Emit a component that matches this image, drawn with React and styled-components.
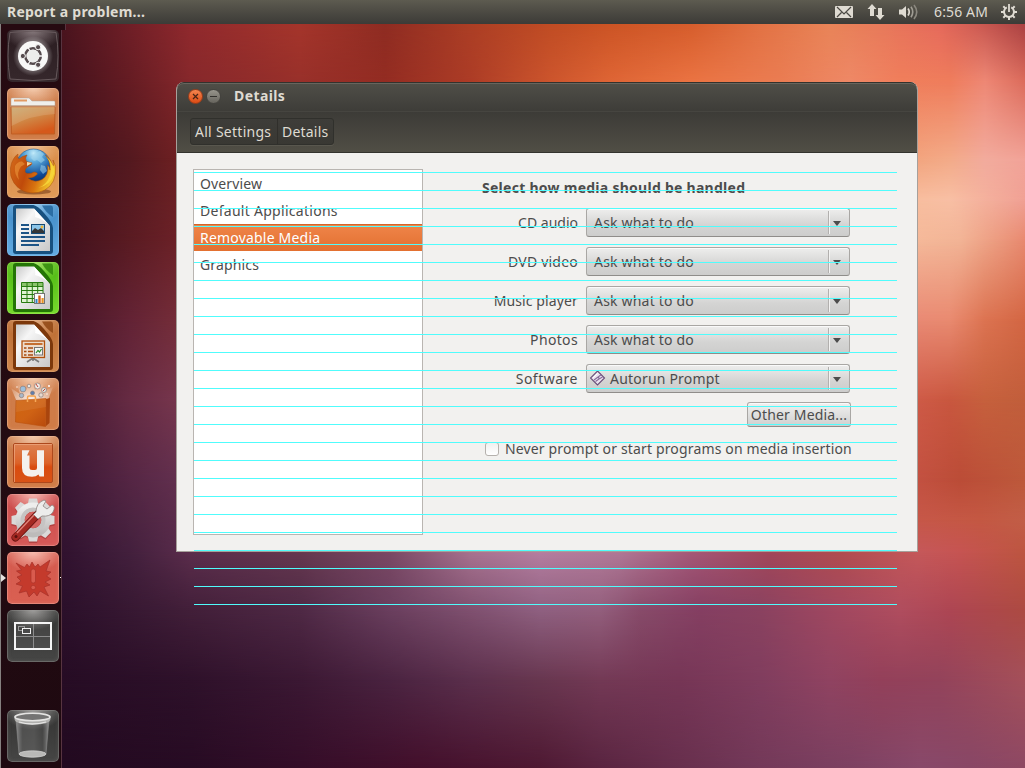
import React from 'react';
import styled, { createGlobalStyle, css } from 'styled-components';

const Global = createGlobalStyle`
  *, *::before, *::after { box-sizing: border-box; }
  html, body { margin: 0; padding: 0; overflow: hidden; }
  body { font-family: "Noto Sans", "Open Sans", sans-serif; font-size: 14px; color: #4c4c4c; }
`;

const Desktop = styled.div`
  position: relative;
  display: flex;
  flex-direction: column;
  width: 1025px;
  height: 768px;
  overflow: hidden;
  background: #2c1029;
`;

const Text = styled.span`
  white-space: pre;
  line-height: 20px;
  letter-spacing: ${(p) => p.$track || 0}px;
  font-weight: ${(p) => (p.$bold ? 700 : 400)};
`;

/* ---------- wallpaper ---------- */

const mesh = [
  { y: 24, c: [[62, '#4a141e'], [130, '#701f27'], [190, '#90292d'], [300, '#a5352b'], [385, '#8f2c22'], [470, '#ac3e25'], [550, '#c04c24'], [610, '#cc5425'], [690, '#d65d2c'], [760, '#e27244'], [830, '#e98458'], [880, '#e87a5b'], [940, '#e66a5c'], [980, '#cc5a52'], [1025, '#aa4142']] },
  { y: 82, c: [[62, '#43121c'], [130, '#651c23'], [190, '#86282b'], [300, '#98302a'], [385, '#932c22'], [470, '#ac3c26'], [550, '#cc552d'], [610, '#de6535'], [690, '#ea7342'], [780, '#ea7c52'], [850, '#ee8866'], [900, '#f07e5b'], [950, '#ef7d5c'], [985, '#ee8875'], [1025, '#dc6c5c']] },
  { y: 160, c: [[62, '#3f111c'], [130, '#54191f'], [190, '#742223'], [900, '#f2a27a'], [950, '#f3ab89'], [985, '#f2ab9d'], [1025, '#f2a398']] },
  { y: 200, c: [[62, '#40121d'], [130, '#571a21'], [190, '#712326'], [900, '#f8bd9c'], [950, '#f8bfa4'], [1025, '#f0a094']] },
  { y: 240, c: [[62, '#40121d'], [130, '#5a1b22'], [190, '#702329'], [900, '#f6bb9b'], [960, '#f2b496'], [1025, '#e8896f']] },
  { y: 320, c: [[62, '#441526'], [130, '#632335'], [190, '#79303a'], [900, '#e98976'], [950, '#e98a70'], [985, '#dc7351'], [1025, '#d36643']] },
  { y: 400, c: [[62, '#431830'], [130, '#662b43'], [190, '#7b3950'], [900, '#d15c4b'], [950, '#c9573f'], [985, '#c6603d'], [1025, '#c15e3b']] },
  { y: 480, c: [[62, '#3b1733'], [130, '#552644'], [190, '#653251'], [900, '#c65345'], [960, '#bb4c37'], [1025, '#bd593b']] },
  { y: 520, c: [[62, '#351531'], [130, '#4b2340'], [190, '#5f2f4e'], [900, '#c7574a'], [980, '#c45843'], [1025, '#c25e47']] },
  { y: 552, c: [[62, '#31122f'], [130, '#43203d'], [190, '#5b2d4c'], [300, '#65384f'], [390, '#7a4864'], [470, '#a7728f'], [540, '#b57ea0'], [620, '#b07896'], [690, '#a55878'], [770, '#a24659'], [840, '#b04c50'], [917, '#c5585a'], [960, '#c65452'], [1025, '#bd5540']] },
  { y: 610, c: [[62, '#2b102a'], [130, '#371832'], [190, '#421f39'], [300, '#4f2945'], [390, '#6a3f5e'], [470, '#7f506f'], [540, '#8f6080'], [600, '#935f7d'], [640, '#884b6a'], [700, '#853f62'], [760, '#8a4260'], [840, '#a24860'], [900, '#b04d5e'], [950, '#ad4653'], [1025, '#ad4a42']] },
  { y: 680, c: [[62, '#260c24'], [190, '#2e112a'], [300, '#3b1833'], [390, '#4a2340'], [470, '#5b2f4c'], [540, '#67364f'], [600, '#733955'], [680, '#763656'], [760, '#803d5e'], [830, '#904361'], [880, '#93405a'], [940, '#93435b'], [1025, '#a4505a']] },
  { y: 768, c: [[62, '#220a20'], [190, '#270b23'], [300, '#340d28'], [420, '#430f2b'], [540, '#4e1832'], [600, '#592440'], [680, '#672f4d'], [760, '#733959'], [850, '#7c4162'], [920, '#88496a'], [970, '#884766'], [1025, '#8e4863']] },
];
const ramp = (row) => `linear-gradient(to right, ${row.c.map(([x, c]) => `${c} ${x}px`).join(', ')})`;

const Wallpaper = styled.div`
  position: absolute;
  inset: 24px 0 0 0;
  display: flex;
  flex-direction: column;
`;
const Band = styled.div`
  display: flex;
  flex: none;
  height: ${(p) => p.$h}px;
  background: ${(p) => p.$from};
  &::after {
    content: '';
    flex: 1;
    background: ${(p) => p.$to};
    mask-image: linear-gradient(to bottom, transparent, #000);
  }
`;

/* ---------- top panel ---------- */

const Panel = styled.header`
  position: relative;
  display: flex;
  align-items: center;
  flex: none;
  height: 24px;
  padding: 0 8px 0 7px;
  color: #dfdbd2;
  background: linear-gradient(#5d5b50, #4c4a43 50%, #3c3b37);
`;
const Indicators = styled.div`
  display: flex;
  align-items: center;
  margin-left: auto;
  svg { display: block; }
`;
const Slot = styled.div`
  display: flex;
  margin-right: ${(p) => p.$gap || 0}px;
`;

/* ---------- launcher ---------- */

const Launcher = styled.nav`
  position: relative;
  display: flex;
  flex-direction: column;
  gap: 6px;
  width: 62px;
  height: 744px;
  padding: 6px 0 6px 6px;
  background: linear-gradient(#260a11, #230b12 60%, #1e0910);
  border-left: 1px solid #85807f;
  border-right: 1px solid #573440;
  &::before {
    content: '';
    position: absolute;
    left: 60px;
    top: 0;
    width: 5px;
    height: 6px;
    background: #260a11;
    border-right: 1px solid #573440;
  }
`;
const tones = {
  dash: ['#8a7d80', '#2a1c20', '#36282c'],
  orange: ['#f5cdb0', '#cd7d4c', '#d07b46'],
  amber: ['#efc093', '#d98b45', '#e09a58'],
  blue: ['#9bcdf0', '#3f88c4', '#62abe2'],
  green: ['#b0ea70', '#4cb412', '#76dc2c'],
  brown: ['#e2b088', '#b96a30', '#cf864c'],
  red: ['#f6b8b0', '#c94848', '#d65a58'],
  coral: ['#f8bdb0', '#d35a4e', '#da6052'],
  gray: ['#a09f9d', '#333332', '#464645'],
};
const Tile = styled.div`
  position: relative;
  display: flex;
  flex: none;
  width: 52px;
  height: 52px;
  border-radius: 5px;
  margin-top: ${(p) => (p.$last ? 'auto' : 0)};
  ${(p) => {
    const [hi, mid, lo] = tones[p.$tone];
    return css`
      background: radial-gradient(ellipse 30px 20px at 50% 0, ${hi}, transparent), linear-gradient(${mid}, ${lo});
      box-shadow: ${p.$tone === 'dash' ? 'none' : `inset 0 0 0 1px ${hi}55, inset 0 0 4px ${hi}44`};
    `;
  }}
  svg { display: block; }
`;
const RunMark = styled.i`
  position: absolute;
  left: -6px;
  top: 22px;
  border: 4px solid transparent;
  border-left: 5px solid #e6e2e0;
  border-right: 0;
`;
const FocusMark = styled.i`
  position: absolute;
  right: -2px;
  top: 25px;
  width: 1px;
  height: 1px;
  background: #fff;
`;

const Art = ({ children }) => <svg width="52" height="52" viewBox="0 0 52 52">{children}</svg>;

const DashArt = () => (
  <Art>
    <defs><radialGradient id="halo"><stop offset=".6" stopColor="#fff" stopOpacity=".4" /><stop offset="1" stopColor="#fff" stopOpacity="0" /></radialGradient></defs>
    <path d="M3 2.5Q26-.5 49 2.5Q53 26 49 49Q26 52 3 49Q-1 26 3 2.5Z" fill="none" stroke="#67595c" strokeWidth="1" />
    <circle cx="26" cy="26" r="20" fill="url(#halo)" />
    <circle cx="26" cy="26" r="15" fill="#f8f8f7" />
    <circle cx="26" cy="26" r="7.8" fill="none" stroke="#554a4d" strokeWidth="2.6" />
    <g stroke="#f8f8f7" strokeWidth="1.3"><path d="M26 26L37 26M26 26L20.5 16.5M26 26L20.5 35.5" /></g>
    <circle cx="26" cy="26" r="6.3" fill="#ededec" />
    <g fill="#554a4d" stroke="#f8f8f7" strokeWidth="1"><circle cx="15.8" cy="26" r="2.6" /><circle cx="31.1" cy="17.2" r="2.6" /><circle cx="31.1" cy="34.8" r="2.6" /></g>
  </Art>
);
const FilesArt = () => (
  <Art>
    <defs><linearGradient id="fold" x1="0" y1="0" x2=".5" y2="1"><stop stopColor="#c8a66c" /><stop offset=".45" stopColor="#cf8d4b" /><stop offset="1" stopColor="#d5591b" /></linearGradient></defs>
    <path d="M4 20V11Q4 10 5 10H22L25 13H47Q48 13 48 14V20Z" fill="#efefec" stroke="#b5a79b" strokeWidth=".5" />
    <path d="M7 11.5H20V13.5H7Z" fill="#e19a64" />
    <path d="M4 18H48" stroke="#a37552" />
    <path d="M4 19H48L47.5 46H4.5Z" fill="url(#fold)" stroke="#bf5e23" strokeWidth="1" />
    <path d="M4.5 38Q24 27 48 26V19.5H4.5Z" fill="#fff" opacity=".13" />
    <path d="M4.5 19.7H47.5" stroke="#e1b077" strokeWidth=".7" />
  </Art>
);
const FirefoxArt = () => (
  <Art>
    <defs>
      <radialGradient id="globe" cx=".5" cy=".12" r=".85"><stop stopColor="#c4ecfa" /><stop offset=".3" stopColor="#5aa8da" /><stop offset=".75" stopColor="#0f4b98" /><stop offset="1" stopColor="#07306f" /></radialGradient>
      <linearGradient id="fur" x1="0" y1="0" x2="1" y2=".3"><stop stopColor="#d56c1c" /><stop offset=".45" stopColor="#bf4a0a" /><stop offset=".72" stopColor="#d87410" /><stop offset="1" stopColor="#f0c02a" /></linearGradient>
    </defs>
    <ellipse cx="27" cy="45.5" rx="17" ry="3" fill="#6d3513" opacity=".55" />
    <circle cx="26.5" cy="20.5" r="17.5" fill="url(#globe)" stroke="#27588f" strokeWidth=".6" />
    <path d="M27 8L33 5L37 8L35 11L38 14L34 17L30 14L27 15L24 12ZM34 19L38 20L40 25L36 28L33 24Z" fill="#a9dbef" opacity=".5" />
    <path d="M3.5 22Q4 17 6.500 13Q8 10 11 8Q10 12 12 13Q15 10 20 9Q17.500 12 19.500 15.500L25 17Q25 19 21 20.500L18.500 23Q17 26 20 27.500Q24 28 27 26Q30 26 30.500 28Q27 32 21 32Q27 37.500 35 33.500Q42 29 40.500 19Q43 21 43 24Q44 16 38.500 9Q44 13 46 20Q47.500 18 46 14Q50 20 48.500 28Q46 43 31 46.500Q15 49 7 37Q2.500 30 3.500 22Z" fill="url(#fur)" stroke="#a84a0b" strokeWidth=".5" />
    <path d="M39 10Q46 19 43 29Q40 39 31 42Q44 39 47 28Q49 20 39 10Z" fill="#f7d83a" opacity=".85" />
    <path d="M8 20Q11 15 15 15.500L18 18L14 20.500Q9.500 26 12 34Q7 28 8 20Z" fill="#ef9a3e" opacity=".55" />
    <path d="M20 20L25 17L20 16Z" fill="#f4d7a5" />
  </Art>
);
const Sheet = ({ id, dark, mid, children }) => (
  <Art>
    <defs><linearGradient id={id} x1="0" y1="0" x2="1" y2="1"><stop stopColor="#c9c9c9" /><stop offset=".3" stopColor="#f6f6f6" /><stop offset="1" stopColor="#c8c8c8" /></linearGradient></defs>
    <path d="M9 1H26.5Q31 2 37 9Q46 19 46 24V47Q46 50 43 50H9Q6 50 6 47V4Q6 1 9 1Z" fill={dark} />
    <path d="M35 1.5H44Q46 1.500 46 4V13Q39 9 35 1.500Z" fill={mid} opacity=".85" />
    <path d="M9 4.5H27L43 22V47H9Z" fill={`url(#${id})`} />
    <path d="M27 4.5Q29 12 28 13Q36 15 43 22Q34 12 27 4.5Z" fill="#fff" />
    {children}
  </Art>
);
const WriterArt = () => (
  <Sheet id="shW" dark="#17507f" mid="#23659c">
    <path d="M14 21H22M14 25H22M14 29H22M14 33H38M14 37H38M14 41H32" stroke="#1d5486" strokeWidth="2" />
    <rect x="24.5" y="20.5" width="13" height="9" fill="#8cc6ea" stroke="#164b76" />
    <path d="M25 29V27L28 24L31 26L34 24L37 27V29Z" fill="#363636" /><circle cx="35" cy="23" r="1.4" fill="#f0b536" />
  </Sheet>
);
const CalcArt = () => (
  <Sheet id="shC" dark="#247506" mid="#328a0c">
    <path d="M14.5 20.5H36V40.5H14.5Z" fill="#dff3d2" /><path d="M14.5 20.5H36V24H14.5Z" fill="#5fab37" opacity=".65" />
    <path d="M14.5 20.5H36V40.5H14.5ZM14.5 24.5H36M14.5 28.5H36M14.5 32.5H36M14.5 36.5H36M20 20.5V40.5M25.3 20.5V40.5M30.7 20.5V40.5" fill="none" stroke="#277b10" />
    <rect x="27.5" y="31.5" width="10" height="10" fill="#fff" stroke="#747474" />
    <path d="M31.3 33.5H33.7V41H31.3Z" fill="#d2621a" /><path d="M34.5 36H36.7V41H34.5Z" fill="#e69424" /><path d="M28.5 37H30.5V41H28.5Z" fill="#3182c1" />
  </Sheet>
);
const ImpressArt = () => (
  <Sheet id="shI" dark="#7c380b" mid="#8f4614">
    <path d="M20 42L26 38L32 42M26 37V41" stroke="#7a7a7a" strokeWidth="1.6" fill="none" />
    <rect x="15" y="21" width="22.5" height="16.5" fill="#eddccc" stroke="#b1500d" strokeWidth="1.3" />
    <path d="M17.5 24H35.5" stroke="#bd5c16" strokeWidth="1.7" />
    <path d="M17 28H19.5M17 31.5H19.5M17 35H19.5M21 28H26M21 31.5H26M21 35H26" stroke="#a74a10" strokeWidth="1.7" />
    <rect x="27.5" y="27.5" width="8" height="7.5" fill="#f5f5f5" stroke="#777" /><path d="M29 33L31 30.5L32.5 32L34.5 29" stroke="#2b8d27" strokeWidth="1.2" fill="none" />
  </Sheet>
);
const SoftwareArt = () => (
  <Art>
    <defs>
      <linearGradient id="bag" x1="0" y1="0" x2="1" y2="1"><stop stopColor="#d0660f" /><stop offset=".5" stopColor="#cf6214" /><stop offset="1" stopColor="#b84a0d" /></linearGradient>
      <radialGradient id="burst" cx=".5" cy=".9" r=".8"><stop stopColor="#fff" stopOpacity=".95" /><stop offset="1" stopColor="#fff" stopOpacity="0" /></radialGradient>
    </defs>
    <path d="M10 24L4 10L13 16L10 5L19 12L24 2L28 12L37 4L35 14L46 9L41 22Z" fill="url(#burst)" />
    <g stroke="#8e7d78" strokeWidth=".7"><circle cx="16" cy="11" r="2.9" fill="#9cc0dc" /><circle cx="22" cy="8" r="1.8" fill="#e8e8e5" /><circle cx="30.5" cy="8" r="3" fill="#f1eae3" /><circle cx="37" cy="12" r="2.5" fill="#dfe2df" /><circle cx="25.5" cy="15" r="2" fill="#5f7eae" /><circle cx="14.5" cy="17.5" r="2.2" fill="#a8b8c9" /><circle cx="34" cy="17" r="2.2" fill="#e7d9cf" /></g>
    <path d="M29 6L31 9M36 13L38 11" stroke="#c14536" /><g fill="#fff"><circle cx="10" cy="9" r=".7" /><circle cx="42" cy="8" r="1" /><circle cx="40" cy="16" r=".7" /></g>
    <path d="M39 21L43 20L42.5 45L38.5 48.5Z" fill="#a9450e" />
    <path d="M9 22.5L39 20.5L38.5 48.5L8.5 44Z" fill="url(#bag)" stroke="#bb500e" strokeWidth=".6" />
    <path d="M20.5 24V19.5Q20.5 18 22 18H27Q28.5 18 28.5 19.5V24" fill="none" stroke="#f6a24c" strokeWidth="1.5" />
    <path d="M9 34L39 29V20.5L9 22.5Z" fill="#fff" opacity=".07" />
  </Art>
);
const OneArt = () => (
  <Art>
    <defs><linearGradient id="one" x1="0" y1="0" x2="0" y2="1"><stop stopColor="#dc8152" /><stop offset=".5" stopColor="#dc6329" /><stop offset=".6" stopColor="#d94c10" /><stop offset="1" stopColor="#d85316" /></linearGradient></defs>
    <rect x="6.5" y="7.5" width="39" height="39" rx="1.5" fill="url(#one)" stroke="#ad481c" />
    <path d="M7.5 46V8.5H45" fill="none" stroke="#efaa84" strokeWidth=".7" />
    <path d="M15 14.3H22.5L20 19.500H22.5V32Q22.5 34 25 34H28Q30 34 30 32V14.3H37V40.5H32.500L31.5 38.5Q29 40.7 25 40.7Q15 40.7 15 32Z" fill="#f4f1ed" />
  </Art>
);
const SettingsArt = () => {
  const teeth = Array.from({ length: 8 }, (_, i) => <path key={i} d="M22 4.5H30L31.5 11H20.5Z" transform={`rotate(${i * 45} 26 26)`} />);
  return (
    <Art>
      <defs><linearGradient id="gear" x1="0" y1="0" x2="0" y2="1"><stop stopColor="#eeeeed" /><stop offset="1" stopColor="#bdbbba" /></linearGradient></defs>
      <g fill="#7f2929" opacity=".4" transform="translate(0 1.5)">{teeth}<circle cx="26" cy="26" r="17" /></g>
      <g fill="#dad9d8">{teeth}</g>
      <circle cx="26" cy="26" r="13" fill="none" stroke="url(#gear)" strokeWidth="9" />
      <circle cx="26" cy="26" r="10.5" fill="none" stroke="#c6c4c3" strokeWidth="4" /><circle cx="26" cy="26" r="8.3" fill="#d4625e" />
      <path d="M8.5 43.5L31 20" stroke="#6d1512" strokeWidth="8" strokeLinecap="round" />
      <path d="M8.5 43.3L31 19.8" stroke="#a42922" strokeWidth="6.4" strokeLinecap="round" />
      <path d="M10 39L29 19" stroke="#e08279" strokeWidth="1.3" />
      <circle cx="9" cy="42.5" r="1.5" fill="#59100d" />
      <path d="M29 18Q29 9 37 6L39 7L36 12L40 15L45 11Q49 12 46 18Q43 23 35 22L31 25L26.5 20.5Z" fill="#ededec" stroke="#8d8380" strokeWidth=".8" />
    </Art>
  );
};
const CrashArt = () => (
  <Art>
    <path d="M9 11L17.500 15.500L20 12L22.500 15L25 10L28 15L31 12L33 15L43 8L39 19L44 20L39.500 24L44 27L38 30L43 33L37 35L41.500 44L33 39L30 44L27 40L22 45L19.500 39L12 41L15.500 34L9 32L14 29L10 25L15 23L9.500 19L14.500 18Z" fill="#c43a2c" stroke="#a6312a" strokeWidth=".7" />
    <rect x="24" y="17" width="4.500" height="14" rx="2" fill="#d95b4e" stroke="#ac332a" strokeWidth=".7" /><rect x="24" y="33.500" width="4.500" height="4" rx="1.800" fill="#d95b4e" stroke="#ac332a" strokeWidth=".7" />
  </Art>
);
const WorkspaceArt = () => (
  <Art>
    <path d="M8 13H44V39H8Z" fill="#fff" opacity=".06" />
    <path d="M26.5 14V38M9 26.5H43" stroke="#8c8c8c" />
    <rect x="8" y="13" width="36" height="26" fill="none" stroke="#f4f4f4" strokeWidth="2" />
    <rect x="11.5" y="16.5" width="6" height="4" fill="none" stroke="#999" /><rect x="15.5" y="18.5" width="8" height="5" fill="#4a4a4a" stroke="#f0f0f0" />
  </Art>
);
const TrashArt = () => (
  <Art>
    <defs><linearGradient id="bin" x1="0" x2="1" y1="0" y2="0"><stop stopColor="#a9aaaa" stopOpacity=".75" /><stop offset=".2" stopColor="#777" stopOpacity=".35" /><stop offset=".55" stopColor="#777" stopOpacity=".4" /><stop offset=".8" stopColor="#666" stopOpacity=".25" /><stop offset="1" stopColor="#bbb" stopOpacity=".7" /></linearGradient></defs>
    <path d="M9 10L12 44Q25 50 39 44L42 10Z" fill="url(#bin)" stroke="#8a8a8a" strokeWidth=".6" />
    <ellipse cx="25.5" cy="44" rx="13.5" ry="3.2" fill="#b9b9b7" stroke="#d6d6d4" strokeWidth=".7" />
    <path d="M7.5 6V9Q8 14.5 25.5 14.5Q43 14.5 43.5 9V6Z" fill="#b8b8b6" opacity=".9" />
    <ellipse cx="25.5" cy="7" rx="17.5" ry="3.7" fill="#747473" stroke="#e4e4e2" strokeWidth="1.6" />
    <path d="M12 12Q25 16 39 12" stroke="#e7e7e6" strokeWidth="1.3" fill="none" />
  </Art>
);

/* ---------- window ---------- */

const Window = styled.section`
  position: absolute;
  left: 176px;
  top: 82px;
  display: flex;
  flex-direction: column;
  width: 742px;
  height: 470px;
  border: 1px solid #a7a09b;
  border-top: 0;
  border-radius: 8px 8px 0 0;
  overflow: hidden;
  background: #f2f1ef;
`;
const TitleBar = styled.div`
  display: flex;
  align-items: center;
  flex: none;
  gap: 3px;
  height: 30px;
  margin: 0 -1px;
  padding: 0 12px 2px;
  border-radius: 8px 8px 0 0;
  color: #dfdbd2;
  background: linear-gradient(#504f48, #3d3c38);
  box-shadow: inset 0 1px #33322e, inset 0 2px #67655d, inset 0 -1px #464540;
  ${Text} { margin-left: 10px; }
`;
const WinButton = styled.span`
  display: flex;
  width: 15px;
  height: 15px;
  margin-top: 1px;
  border-radius: 50%;
  border: 1px solid ${(p) => (p.$close ? '#9d3e1b' : '#44433e')};
  background: ${(p) => (p.$close ? 'linear-gradient(#f4864f, #dc4b14)' : 'linear-gradient(#97958c, #66645d)')};
`;
const ToolBar = styled.div`
  display: flex;
  align-items: center;
  flex: none;
  height: 41px;
  margin: 0 -1px;
  padding: 0 14px 1px;
  background: linear-gradient(#3c3b37, #504e45);
  border-bottom: 1px solid #34332e;
`;
const Crumbs = styled.div`
  display: flex;
  height: 27px;
  border: 1px solid #30302c;
  border-radius: 3px;
  background: linear-gradient(#3e3d39, #393833);
  box-shadow: 0 1px #59574e;
`;
const Crumb = styled.span`
  display: flex;
  align-items: center;
  width: ${(p) => p.$w}px;
  padding-left: 4px;
  color: #dfdbd2;
  & + & { border-left: 1px solid #302f2b; }
`;
const Body = styled.div`
  display: flex;
  flex: 1;
  padding: 16px;
`;
const List = styled.div`
  width: 230px;
  height: 366px;
  border: 1px solid #b9b5b1;
  background: #fff;
`;
const ListRow = styled.div`
  display: flex;
  align-items: center;
  height: 27px;
  padding: 1px 0 0 6px;
  ${(p) => p.$on && css`
    color: #fff;
    background: linear-gradient(#ef854a, #e37030);
    box-shadow: inset 0 1px #d0652c;
  `}
`;
const Form = styled.div`
  display: flex;
  flex-direction: column;
  width: 428px;
  padding-top: 9px;
  padding-left: 59px;
`;
const FormRow = styled.div`
  display: grid;
  grid-template-columns: 96px 264px;
  column-gap: 8px;
  align-items: center;
  height: 29px;
  margin-bottom: 10px;
  ${Text}:first-child { justify-self: end; }
`;
const Heading = styled.h2`
  display: flex;
  margin: 0 0 10px;
  font-size: 14px;
`;
const Combo = styled.div`
  display: flex;
  align-items: center;
  height: 29px;
  padding-left: ${(p) => (p.$icon ? 3 : 7)}px;
  border: 1px solid #a9a7a4;
  border-bottom-color: #8f8d8a;
  border-radius: 3px;
  background: linear-gradient(#eeeeed, #d4d4d3 60%, #cdcdcc);
  box-shadow: inset 0 1px #fafafa;
  svg { display: block; margin: -2px 4px 0 0; }
`;
const Arrow = styled.span`
  display: flex;
  align-items: center;
  width: 21px;
  height: 23px;
  margin-left: auto;
  padding-left: 4px;
  border-left: 1px solid #b2b0ae;
  box-shadow: inset 1px 0 #f3f3f2;
  &::after { content: ''; margin-top: 1px; border: 4px solid transparent; border-top: 5px solid #4c4c4c; border-bottom: 0; }
`;
const Button = styled.div`
  display: flex;
  align-items: center;
  justify-content: center;
  align-self: flex-end;
  width: 104px;
  height: 25px;
  margin: -1px 0 12px;
  border: 1px solid #a9a7a4;
  border-bottom-color: #8f8d8a;
  border-radius: 3px;
  background: linear-gradient(#f1f1f0, #cfcfce);
  box-shadow: inset 0 1px #fafafa;
`;
const CheckRow = styled.label`
  display: flex;
  align-items: center;
  gap: 6px;
  padding-left: 3px;
`;
const Box = styled.span`
  flex: none;
  width: 14px;
  height: 14px;
  border: 1px solid #b5b1ad;
  border-radius: 3px;
  background: linear-gradient(#f0f0ef, #fff);
`;

const ScanLines = styled.div`
  position: absolute;
  left: 194px;
  top: 172px;
  width: 703px;
  height: 433px;
  pointer-events: none;
  background: repeating-linear-gradient(#50fcfc 0 1px, transparent 1px 18px);
`;

const options = [
  { label: 'CD audio', track: 0, value: 'Ask what to do' },
  { label: 'DVD video', track: 0.22, value: 'Ask what to do' },
  { label: 'Music player', track: 0.12, value: 'Ask what to do' },
  { label: 'Photos', track: 0.35, value: 'Ask what to do' },
  { label: 'Software', track: 0.5, value: 'Autorun Prompt', icon: true },
];

const AutorunIcon = () => (
  <svg width="16" height="16" viewBox="0 0 16 16">
    <path d="M7.5 1L14.5 8L7.5 15L.5 8Z" fill="#e9e2ee" stroke="#694d78" strokeWidth="1.1" />
    <path d="M4 10L11.500 4.500M5.500 11.500L9 9L8.500 6.500M9 9L12.500 7" fill="none" stroke="#876b99" strokeWidth="1.1" />
    <path d="M3 8L7.5 3.5" stroke="#fff" />
  </svg>
);

export default function App() {
  return (
    <>
      <Global />
      <Desktop>
        <Wallpaper>
          {mesh.slice(0, -1).map((row, i) => (
            <Band key={row.y} $h={mesh[i + 1].y - row.y} $from={ramp(row)} $to={ramp(mesh[i + 1])} />
          ))}
        </Wallpaper>
        <Panel>
          <Text $bold $track={0.24}>Report a problem...</Text>
          <Indicators>
            <Slot $gap={14}>
              <svg width="18" height="12" viewBox="0 0 18 12"><rect width="18" height="12" rx="1" fill="#dfdbd2" /><path d="M2 1L9 8L16 1M2 11L6.5 6.5M16 11L11.5 6.5" fill="none" stroke="#4a4842" strokeWidth="1.2" /></svg>
            </Slot>
            <Slot $gap={14}>
              <svg width="18" height="18" viewBox="0 0 18 18"><path d="M5 1L9.5 6H7V13H3V6H.5ZM13 17L8.5 12H11V5H15V12H17.5Z" fill="#dfdbd2" /></svg>
            </Slot>
            <Slot $gap={15}>
              <svg width="20" height="16" viewBox="0 0 20 16"><path d="M0 5.5H3L7 2V14L3 10.5H0Z" fill="#dfdbd2" /><path d="M9 4.5Q11.5 8 9 11.5" fill="none" stroke="#dfdbd2" strokeWidth="1.7" /><path d="M12 2.8Q15.5 8 12 13.2" fill="none" stroke="#a09d94" strokeWidth="1.6" /><path d="M15 1Q20.5 8 15 15" fill="none" stroke="#8b887f" strokeWidth="1.6" /></svg>
            </Slot>
            <Slot $gap={13}><Text $track={0.13}>6:56 AM</Text></Slot>
            <svg width="16" height="16" viewBox="0 0 16 16">
              <g fill="none" stroke="#dfdbd2"><path d="M5.8 3.4A5 5 0 1 0 10.2 3.4" strokeWidth="2" /><path d="M8 0V8" strokeWidth="1.8" /><path d="M0 8H3M13 8H16M8 13V16M2.3 2.3L4.4 4.4M13.7 2.3L11.6 4.4M2.3 13.7L4.4 11.6M13.7 13.7L11.6 11.6" strokeWidth="2" /></g>
            </svg>
          </Indicators>
        </Panel>
        <Launcher>
          <Tile $tone="dash"><DashArt /></Tile>
          <Tile $tone="orange"><FilesArt /></Tile>
          <Tile $tone="amber"><FirefoxArt /></Tile>
          <Tile $tone="blue"><WriterArt /></Tile>
          <Tile $tone="green"><CalcArt /></Tile>
          <Tile $tone="brown"><ImpressArt /></Tile>
          <Tile $tone="orange"><SoftwareArt /></Tile>
          <Tile $tone="orange"><OneArt /></Tile>
          <Tile $tone="red"><SettingsArt /></Tile>
          <Tile $tone="coral"><CrashArt /><RunMark /><FocusMark /></Tile>
          <Tile $tone="gray"><WorkspaceArt /></Tile>
          <Tile $tone="gray" $last><TrashArt /></Tile>
        </Launcher>
        <Window>
          <TitleBar>
            <WinButton $close><svg width="13" height="13" viewBox="0 0 13 13"><path d="M4 4L9 9M9 4L4 9" stroke="#4a2414" strokeWidth="1.2" /></svg></WinButton>
            <WinButton><svg width="13" height="13" viewBox="0 0 13 13"><path d="M3 6.5H10" stroke="#33322e" strokeWidth="1.2" /></svg></WinButton>
            <Text $bold $track={0.4}>Details</Text>
          </TitleBar>
          <ToolBar>
            <Crumbs>
              <Crumb $w={86}><Text $track={0.27}>All Settings</Text></Crumb>
              <Crumb $w={56}><Text $track={0.2}>Details</Text></Crumb>
            </Crumbs>
          </ToolBar>
          <Body>
            <List>
              <ListRow><Text $track={0.12}>Overview</Text></ListRow>
              <ListRow><Text $track={0.28}>Default Applications</Text></ListRow>
              <ListRow $on><Text $track={0.2}>Removable Media</Text></ListRow>
              <ListRow><Text $track={0.15}>Graphics</Text></ListRow>
            </List>
            <Form>
              <Heading><Text $bold $track={0.27}>Select how media should be handled</Text></Heading>
              {options.map(({ label, track, value, icon }) => (
                <FormRow key={label}>
                  <Text $track={track}>{label}</Text>
                  <Combo $icon={icon}>
                    {icon && <AutorunIcon />}
                    <Text $track={0.2}>{value}</Text>
                    <Arrow />
                  </Combo>
                </FormRow>
              ))}
              <Button><Text $track={0.17}>Other Media...</Text></Button>
              <CheckRow><Box /><Text $track={0.15}>Never prompt or start programs on media insertion</Text></CheckRow>
            </Form>
          </Body>
        </Window>
        <ScanLines />
      </Desktop>
    </>
  );
}
